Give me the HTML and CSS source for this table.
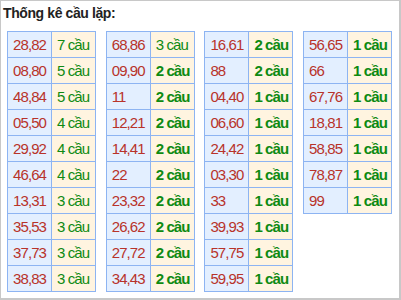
FILE: index.html
```html
<!DOCTYPE html>
<html>
<head>
<meta charset="utf-8">
<link rel="stylesheet" href="styles.css">
</head>
<body>
<div class="box">
  <div class="title">Thống kê cầu lặp:</div>
  <div class="grid">
    <table class="tk">
      <tr><td class="so">28,82</td><td class="cau">7 cầu</td></tr>
      <tr><td class="so">08,80</td><td class="cau">5 cầu</td></tr>
      <tr><td class="so">48,84</td><td class="cau">5 cầu</td></tr>
      <tr><td class="so">05,50</td><td class="cau">4 cầu</td></tr>
      <tr><td class="so">29,92</td><td class="cau">4 cầu</td></tr>
      <tr><td class="so">46,64</td><td class="cau">4 cầu</td></tr>
      <tr><td class="so">13,31</td><td class="cau">3 cầu</td></tr>
      <tr><td class="so">35,53</td><td class="cau">3 cầu</td></tr>
      <tr><td class="so">37,73</td><td class="cau">3 cầu</td></tr>
      <tr><td class="so">38,83</td><td class="cau">3 cầu</td></tr>
    </table>
    <table class="tk">
      <tr><td class="so">68,86</td><td class="cau">3 cầu</td></tr>
      <tr><td class="so">09,90</td><td class="cau b">2 cầu</td></tr>
      <tr><td class="so">11</td><td class="cau b">2 cầu</td></tr>
      <tr><td class="so">12,21</td><td class="cau b">2 cầu</td></tr>
      <tr><td class="so">14,41</td><td class="cau b">2 cầu</td></tr>
      <tr><td class="so">22</td><td class="cau b">2 cầu</td></tr>
      <tr><td class="so">23,32</td><td class="cau b">2 cầu</td></tr>
      <tr><td class="so">26,62</td><td class="cau b">2 cầu</td></tr>
      <tr><td class="so">27,72</td><td class="cau b">2 cầu</td></tr>
      <tr><td class="so">34,43</td><td class="cau b">2 cầu</td></tr>
    </table>
    <table class="tk">
      <tr><td class="so">16,61</td><td class="cau b">2 cầu</td></tr>
      <tr><td class="so">88</td><td class="cau b">2 cầu</td></tr>
      <tr><td class="so">04,40</td><td class="cau b">1 cầu</td></tr>
      <tr><td class="so">06,60</td><td class="cau b">1 cầu</td></tr>
      <tr><td class="so">24,42</td><td class="cau b">1 cầu</td></tr>
      <tr><td class="so">03,30</td><td class="cau b">1 cầu</td></tr>
      <tr><td class="so">33</td><td class="cau b">1 cầu</td></tr>
      <tr><td class="so">39,93</td><td class="cau b">1 cầu</td></tr>
      <tr><td class="so">57,75</td><td class="cau b">1 cầu</td></tr>
      <tr><td class="so">59,95</td><td class="cau b">1 cầu</td></tr>
    </table>
    <table class="tk">
      <tr><td class="so">56,65</td><td class="cau b">1 cầu</td></tr>
      <tr><td class="so">66</td><td class="cau b">1 cầu</td></tr>
      <tr><td class="so">67,76</td><td class="cau b">1 cầu</td></tr>
      <tr><td class="so">18,81</td><td class="cau b">1 cầu</td></tr>
      <tr><td class="so">58,85</td><td class="cau b">1 cầu</td></tr>
      <tr><td class="so">78,87</td><td class="cau b">1 cầu</td></tr>
      <tr><td class="so">99</td><td class="cau b">1 cầu</td></tr>
    </table>
  </div>
</div>
</body>
</html>
```

FILE: styles.css
```css
html, body {
  margin: 0;
  padding: 0;
  background: #fff;
}
body {
  font-family: Arial, "Liberation Sans", sans-serif;
}
.box {
  width: 398px;
  height: 297px;
  border-style: solid;
  border-color: #c8c8c8;
  border-width: 1px 2px 2px 1px;
  overflow: hidden;
}
.title {
  font-weight: bold;
  font-size: 14px;
  letter-spacing: -0.4px;
  color: #222;
  padding: 4px 0 0 2px;
  height: 30px;
  box-sizing: border-box;
  line-height: 16px;
}
.grid {
  display: flex;
  align-items: flex-start;
  gap: 9.7px;
  padding-left: 6px;
}
.tk {
  border-collapse: collapse;
  table-layout: fixed;
  width: 89px;
}
.tk td {
  border: 1px solid #8db4f2;
  height: 26px;
  padding: 0 0 0 5px;
  font-size: 15px;
  letter-spacing: -0.9px;
  line-height: 16px;
  box-sizing: border-box;
  white-space: nowrap;
  overflow: hidden;
}
.so {
  background: #e3efff;
  color: #b8332a;
  width: 44px;
}
.cau {
  background: #fff4e0;
  color: #0e8a12;
}
.cau.b {
  font-weight: bold;
}
```
